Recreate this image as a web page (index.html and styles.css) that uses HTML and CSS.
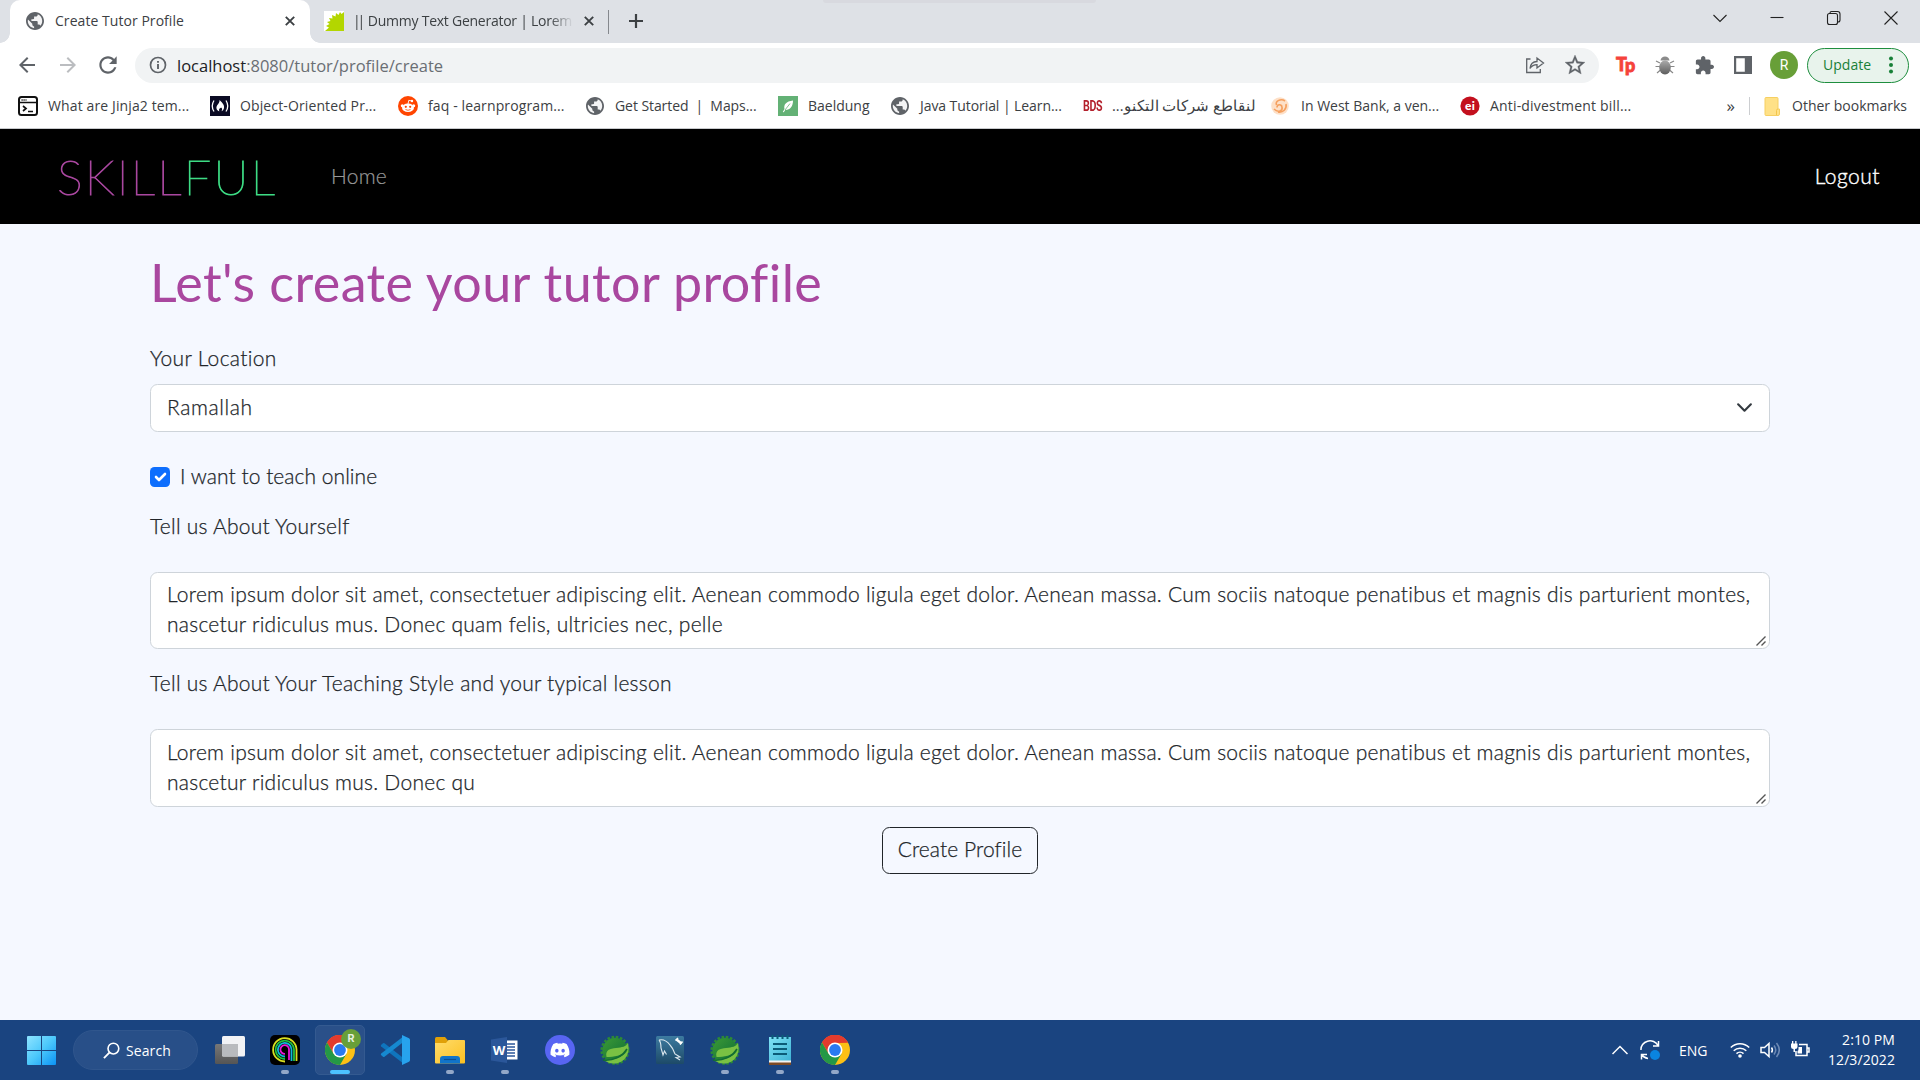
FILE: index.html
```html
<!DOCTYPE html>
<html lang="en">
<head>
<meta charset="utf-8">
<title>Create Tutor Profile</title>
<link rel="stylesheet" href="styles.css">
</head>
<body>
<svg class="defs" aria-hidden="true">
  <defs>
    <linearGradient id="win" x1="0" y1="0" x2="1" y2="1"><stop offset="0" stop-color="#8fe4ff"/><stop offset=".5" stop-color="#4cc8fb"/><stop offset="1" stop-color="#0b93f5"/></linearGradient>
    <linearGradient id="gray" x1="0" y1="0" x2="0" y2="1"><stop offset="0" stop-color="#777"/><stop offset="1" stop-color="#555"/></linearGradient>
    <linearGradient id="folder" x1="0" y1="0" x2="1" y2="1"><stop offset="0" stop-color="#ffdc6b"/><stop offset="1" stop-color="#fcc021"/></linearGradient>
    <linearGradient id="spring" x1="0" y1="0" x2="1" y2="1"><stop offset="0" stop-color="#3c9a36"/><stop offset="1" stop-color="#0b6b35"/></linearGradient>
    <linearGradient id="note" x1="0" y1="0" x2="1" y2="1"><stop offset="0" stop-color="#7fe3f5"/><stop offset="1" stop-color="#3fb4d6"/></linearGradient>
    <linearGradient id="sql" x1="0" y1="0" x2="0" y2="1"><stop offset="0" stop-color="#3d7ba0"/><stop offset="1" stop-color="#1d4a68"/></linearGradient>
    <linearGradient id="beetle" x1="0" y1="0" x2="0" y2="1"><stop offset="0" stop-color="#aaa"/><stop offset="1" stop-color="#5d5d5d"/></linearGradient>
  </defs>
  <symbol id="globe" viewBox="2 2 20 20"><circle cx="12" cy="12" r="9" fill="#f4f4f5"/><path fill="#5f6368" d="M12 2C6.48 2 2 6.48 2 12s4.48 10 10 10 10-4.48 10-10S17.52 2 12 2zm-1 17.93c-3.95-.49-7-3.85-7-7.93 0-.62.08-1.21.21-1.79L9 15v1c0 1.1.9 2 2 2v1.93zm6.9-2.54c-.26-.81-1-1.39-1.9-1.39h-1v-3c0-.55-.45-1-1-1H8v-2h2c.55 0 1-.45 1-1V7h2c1.1 0 2-.9 2-2v-.41c2.93 1.19 5 4.06 5 7.41 0 2.08-.8 3.97-2.1 5.39z"/></symbol>
  <symbol id="close" viewBox="0 0 10 10"><path d="M.8.8l8.4 8.4M9.2.8L.8 9.2" stroke="#3c4043" stroke-width="1.9"/></symbol>
  <symbol id="grip" viewBox="0 0 10 10"><path d="M.5 9.500l9-9M5.500 9.500l4-4" stroke="#555" stroke-width="1.400"/></symbol>
  <symbol id="arrow" viewBox="0 0 24 24"><path fill="currentColor" d="M20 11H7.83l5.59-5.59L12 4l-8 8 8 8 1.41-1.41L7.83 13H20v-2z"/></symbol>
  <symbol id="chrome" viewBox="0 0 30 30">
    <circle cx="15" cy="15" r="15" fill="#fcc015"/>
    <path fill="#e33b2e" d="M2 7.5A15 15 0 0 1 28 7.5L15 8.2z"/>
    <path fill="#e33b2e" d="M2 7.5L8.6 18.7 15 15V7.5h13A15 15 0 0 0 2 7.5z"/>
    <path fill="#249846" d="M2 7.5A15 15 0 0 0 15 30l6.5-11.2L15 15 8.6 18.7z"/>
    <circle cx="15" cy="15" r="7.5" fill="#fff"/><circle cx="15" cy="15" r="5.9" fill="#2a7af0"/>
  </symbol>
  <symbol id="leaf" viewBox="0 0 30 30">
    <circle cx="15" cy="15.3" r="12.6" fill="url(#spring)"/>
    <circle cx="15" cy="15.3" r="13.3" fill="none" stroke="#2c8a35" stroke-width="2.6" stroke-dasharray="2.6 1.6"/>
    <path d="M28 8c2 9-1 17-10 20-6 1.500-11-.5-14-3 9 .5 18-2 23.500-9.500C22 20.500 14 22 6.500 22 5 15 10 13.500 16 13 22 12.500 26 11.500 28 8z" fill="#7ac143"/>
    <path d="M3 25c10 1 19-3 24-11" fill="none" stroke="#126c33" stroke-width="1.600"/>
  </symbol>
</svg>

<header class="browser">
  <div class="tabs">
    <div class="tab tab-active">
      <svg class="fav18"><use href="#globe"/></svg>
      <span class="tab-title">Create Tutor Profile</span>
      <svg class="x"><use href="#close"/></svg>
    </div>
    <div class="tab tab-idle">
      <svg class="fav20" viewBox="0 0 20 20"><path fill="#fff" d="M0 0h20v20H0z"/><path fill="#b3d600" d="M20 1l-2.500 2L16 1l-1.500 3L12 2l-.5 3.500L8 4l.5 3.500L5 7l1.500 3L3 11l2.500 2L2 15l3 1.500L1 20h19z"/></svg>
      <span class="tab-title tab-fade"><span class="bars">||</span> Dummy Text Generator | Lorem</span>
      <svg class="x"><use href="#close"/></svg>
    </div>
    <svg class="plus" viewBox="0 0 16 16"><path d="M8 1v14M1 8h14" stroke="#3c4043" stroke-width="2.200"/></svg>
    <div class="window-buttons">
      <svg viewBox="0 0 16 16"><path d="M1.500 5L8 11.500 14.500 5"/></svg>
      <svg viewBox="0 0 16 16"><path d="M1.500 7.500h13"/></svg>
      <svg viewBox="0 0 16 16"><rect x="1.500" y="3.500" width="10" height="11" rx="2"/><path d="M4 3.500V3q0-1.500 1.500-1.500h6q2.500 0 2.500 2.500v6q0 2-2 2"/></svg>
      <svg viewBox="0 0 16 16"><path d="M1.500 1.500l13 13M14.500 1.500l-13 13"/></svg>
    </div>
    <div class="hint-bar"></div>
  </div>

  <div class="toolbar">
    <svg class="nav-icon"><use href="#arrow"/></svg>
    <svg class="nav-icon forward"><use href="#arrow"/></svg>
    <svg class="reload" viewBox="0 0 24 24"><path fill="#5f6368" d="M17.650 6.350C16.200 4.900 14.210 4 12 4c-4.420 0-7.990 3.580-7.990 8s3.570 8 7.990 8c3.730 0 6.840-2.550 7.730-6h-2.080c-.82 2.330-3.040 4-5.650 4-3.310 0-6-2.690-6-6s2.690-6 6-6c1.660 0 3.140.69 4.220 1.780L13 11h7V4l-2.350 2.350z"/></svg>
    <div class="omnibox">
      <svg class="info" viewBox="0 0 18 18"><circle cx="9" cy="9" r="7.500" fill="none" stroke="#5f6368" stroke-width="1.700"/><path d="M9 8v5M9 5v1.800" stroke="#5f6368" stroke-width="1.900"/></svg>
      <span class="url"><b>localhost</b>:8080/tutor/profile/create</span>
      <svg class="share" viewBox="0 0 20 20"><path d="M5.500 4H1.700v13.500h13.600V14" /><path d="M5 13.500c.5-4.500 3-7 7-7V3l6.500 5-6.500 5V9.700c-3 0-5.200 1-7 3.800z"/></svg>
      <svg class="star" viewBox="0 0 24 24"><path fill="#5f6368" stroke="#5f6368" stroke-width=".3" d="M22 9.240l-7.190-.62L12 2 9.190 8.630 2 9.240l5.460 4.730L5.820 21 12 17.270 18.180 21l-1.630-7.030L22 9.240zM12 15.400l-3.760 2.270 1-4.280-3.320-2.880 4.380-.38L12 6.100l1.710 4.040 4.380.38-3.320 2.880 1 4.280L12 15.400z"/></svg>
    </div>
    <div class="ext">
      <div class="tp"><span>T</span><span class="tp-p">p</span></div>
      <svg class="bug" viewBox="0 0 20 20"><g stroke="#888" stroke-width="1.200" fill="none"><path d="M5 8L1 6M5 11.500H.5M5.500 15L2 18M15 8l4-2M15 11.500h4.500M14.500 15l3.500 3"/></g><ellipse cx="10" cy="12.500" rx="5.800" ry="7" fill="url(#beetle)"/><path d="M5.500 5.500C6 0 14 0 14.500 5.500z" fill="#8b8b8b"/></svg>
      <svg class="puzzle" viewBox="1 1 22 22"><path fill="#5f6368" d="M20.500 11H19V7c0-1.100-.9-2-2-2h-4V3.500C13 2.120 11.880 1 10.500 1S8 2.120 8 3.500V5H4c-1.100 0-1.990.9-1.990 2v3.800H3.500c1.490 0 2.700 1.210 2.700 2.700s-1.210 2.700-2.700 2.700H2V20c0 1.100.9 2 2 2h3.800v-1.500c0-1.490 1.210-2.700 2.700-2.700 1.490 0 2.700 1.210 2.700 2.700V22H17c1.100 0 2-.9 2-2v-4h1.500c1.380 0 2.500-1.120 2.500-2.500S21.880 11 20.500 11z"/></svg>
      <svg class="panel" viewBox="0 0 18 18"><path fill="#5f6368" fill-rule="evenodd" d="M0 0h18v18H0zM2.200 2.200v13.600h8.600V2.200z"/></svg>
      <div class="avatar">R</div>
      <div class="update"><span>Update</span><i></i></div>
    </div>
  </div>

  <div class="bookmarks">
    <div class="bm wide1"><svg viewBox="0 0 20 20"><rect x="1" y="1" width="18" height="18" rx="2.500" fill="#fff" stroke="#111" stroke-width="2"/><path d="M1 6.500h18M5 10l3 2.500L5 15M10 15.500h5" fill="none" stroke="#111" stroke-width="1.700"/><path d="M3.500 4h5" stroke="#111" stroke-width="1.300" stroke-dasharray="1.200 .8"/></svg><span>What are Jinja2 tem...</span></div>
    <div class="bm wide1"><svg viewBox="0 0 20 20"><path fill="#0a0a23" d="M0 0h20v20H0z"/><path d="M4 4.500Q.5 10 4 15.500M16 4.500q3.500 5.500 0 11" fill="none" stroke="#fff" stroke-width="1.300"/><path d="M9.500 4c3.500 3 5 5.500 4.500 8-.2 1.600-1.200 2.600-2.500 3.200 1-1.700.7-2.700-.3-3.700-.4 1-.8 1-.8 0-1 1.200-2 2.500-1 3.700-3-.7-3.700-3.700-2.200-6 1.500-2 2.500-2.700 2.300-5.200z" fill="#fff"/></svg><span>Object-Oriented Pr...</span></div>
    <div class="bm wide1"><svg viewBox="0 0 20 20"><circle cx="10" cy="10" r="10" fill="#ff4500"/><ellipse cx="10" cy="11.700" rx="6" ry="4.300" fill="#fff"/><circle cx="4.300" cy="9.700" r="1.500" fill="#fff"/><circle cx="15.700" cy="9.700" r="1.500" fill="#fff"/><path d="M10 8l.8-3.700 3 .7" fill="none" stroke="#fff" stroke-width=".9"/><circle cx="14" cy="5" r="1.200" fill="#fff"/><circle cx="7.800" cy="10.800" r="1.100" fill="#ff4500"/><circle cx="12.200" cy="10.800" r="1.100" fill="#ff4500"/><path d="M7.500 13.500q2.500 1.600 5 0" fill="none" stroke="#ff4500" stroke-width=".8"/></svg><span>faq - learnprogram...</span></div>
    <div class="bm snug"><svg class="small"><use href="#globe"/></svg><span>Get Started&nbsp; |&nbsp; Maps...</span></div>
    <div class="bm"><svg viewBox="0 0 20 20"><path fill="#63b175" d="M0 0h20v20H0z"/><path d="M15 4.500c-7 1-9.500 4-8.500 8.500l-1.700 3 1 .3 1.400-2.300c5.300 0 7.800-4 7.800-9.500z" fill="#fff"/><path d="M7 14l5-6.500" stroke="#63b175" stroke-width=".8"/></svg><span>Baeldung</span></div>
    <div class="bm snug"><svg class="small"><use href="#globe"/></svg><span>Java Tutorial | Learn...</span></div>
    <div class="bm"><b class="bds">BDS</b><span class="arabic" dir="rtl">لنقاطع شركات التكنو...</span></div>
    <div class="bm"><svg viewBox="0 0 20 20"><circle cx="9" cy="10" r="8.800" fill="#fde0c8"/><path d="M3 13c4 4 9 2 8-2-.5-3-5-3-5 .5M14 5c-4-3-10 0-8.500 4M15 8c1 5-3 9-8 8" fill="none" stroke="#f5a05f" stroke-width="1.600"/></svg><span>In West Bank, a ven...</span></div>
    <div class="bm wide2"><svg viewBox="0 0 20 20"><circle cx="10" cy="10" r="9.600" fill="#c3101e"/><text x="10" y="14" text-anchor="middle" class="ei">ei</text></svg><span>Anti-divestment bill...</span></div>
    <div class="bm-end"><span class="more">»</span><svg class="bm-folder" viewBox="0 0 16 19"><path fill="#ffe187" stroke="#f6cf62" d="M1 1.500q0-1 1-1h11q1 0 1 1V12h1.500v5q0 1.500-1.500 1.500H2q-1 0-1-1z"/><path d="M12.500 18v-4.500q0-1.500 1.500-1.500" fill="none" stroke="#f3c54c"/></svg><span class="other">Other bookmarks</span></div>
  </div>
</header>

<nav class="navbar">
  <a class="brand"><span class="skill">SKILL</span><span class="ful">FUL</span></a>
  <a class="home">Home</a>
  <a class="logout">Logout</a>
</nav>

<main class="page">
  <h1>Let's create your tutor profile</h1>
  <form class="form">
    <label class="label location-label">Your Location</label>
    <div class="select"><span>Ramallah</span><svg viewBox="0 0 16 16"><path fill="none" stroke="#343a40" stroke-linecap="round" stroke-linejoin="round" stroke-width="2" d="m2 5 6 6 6-6"/></svg></div>
    <div class="check"><svg viewBox="0 0 20 20"><rect width="20" height="20" rx="4.500" fill="#0d6efd"/><path fill="none" stroke="#fff" stroke-linecap="round" stroke-linejoin="round" stroke-width="2.600" d="m6 10 3 3 6-6"/></svg><label>I want to teach online</label></div>
    <label class="label about-label">Tell us About Yourself</label>
    <div class="area"><textarea class="about">Lorem ipsum dolor sit amet, consectetuer adipiscing elit. Aenean commodo ligula eget dolor. Aenean massa. Cum sociis natoque penatibus et magnis dis parturient montes, nascetur ridiculus mus. Donec quam felis, ultricies nec, pelle</textarea><svg class="grip"><use href="#grip"/></svg></div>
    <label class="label style-label">Tell us About Your Teaching Style and your typical lesson</label>
    <div class="area"><textarea class="style">Lorem ipsum dolor sit amet, consectetuer adipiscing elit. Aenean commodo ligula eget dolor. Aenean massa. Cum sociis natoque penatibus et magnis dis parturient montes, nascetur ridiculus mus. Donec qu</textarea><svg class="grip"><use href="#grip"/></svg></div>
    <button type="button" class="submit">Create Profile</button>
  </form>
</main>

<footer class="taskbar">
  <svg class="start" viewBox="0 0 29 29"><path fill="url(#win)" d="M1 0h13v14H0V1q0-1 1-1zM15 0h13q1 0 1 1v13H15zM0 15h14v14H1q-1 0-1-1zM15 15h14v13q0 1-1 1H15z"/></svg>
  <div class="search"><svg viewBox="0 0 18 18"><circle cx="11" cy="7" r="5.700" fill="none" stroke="#fff" stroke-width="1.700"/><path d="M7 11l-6 6" stroke="#fff" stroke-width="2"/></svg>Search</div>
  <div class="apps">
    <div class="app"><svg viewBox="0 0 30 30"><rect x="0" y="9" width="23" height="20" rx="1.500" fill="url(#gray)"/><rect x="7" y="1" width="23" height="20.500" rx="1.500" fill="#f2f3f5"/><path d="M7 9h16v12.500H8.500Q7 21.500 7 20z" fill="#b9bbbe"/></svg></div>
    <div class="app running"><svg viewBox="0 0 30 30"><rect width="30" height="30" rx="5" fill="#000"/><g fill="none" stroke-width="1.800"><path d="M26.500 26V14.500A11.700 11.700 0 1 0 15 26.500" stroke="#d8e020"/><path d="M24 26V14.500A9.200 9.200 0 1 0 15 24" stroke="#20c040"/><path d="M21.500 26V14.500A6.800 6.800 0 1 0 15 21.500" stroke="#10b8d8"/><path d="M19 25V14.500a4.300 4.300 0 1 0-4 4.300" stroke="#e818d8"/></g></svg></div>
    <div class="app running current"><svg><use href="#chrome"/></svg><span class="badge">R</span></div>
    <div class="app"><svg viewBox="0 0 30 30"><path fill="#0f75bd" d="M1 10l2-1.700q.8-.5 1.500 0L24 23.500V29L1.200 11.500Q.5 10.700 1 10z"/><path fill="#1689d0" d="M1 20l2 1.700q.8.500 1.500 0L24 6.500V1L1.200 18.500q-.7.800-.2 1.500z"/><path fill="#27a3ee" d="M22 0l7 3.300q1 .5 1 1.700v20q0 1.200-1 1.700L22 30V0z"/></svg></div>
    <div class="app running"><svg viewBox="0 0 30 30"><path fill="#e0a008" d="M0 3.500Q0 2 1.500 2H10l3 3.500V9H0z"/><path fill="url(#folder)" d="M0 8h11l2.500-3H29q1 0 1 1v21.500q0 1-1 1H1q-1 0-1-1z"/><path fill="#1174c9" d="M5 28.500V24q0-3 3-3h14q3 0 3 3v4.500z"/><path d="M9 24.500h12" stroke="#0b4f94" stroke-width="1.200"/></svg></div>
    <div class="app running"><svg viewBox="0 0 30 30"><path fill="#fff" d="M15 5.500h12.500v19H15z"/><path d="M17 9h8M17 12h8M17 15h8M17 18h8M17 21h8" stroke="#2b579a" stroke-width="1.300"/><path fill="#2b579a" d="M1 4.500L17 2v26L1 25.500z"/><text x="9" y="19.500" text-anchor="middle" class="word">W</text></svg></div>
    <div class="app"><svg viewBox="0 0 30 30"><circle cx="15" cy="15" r="15" fill="#5865f2"/><path fill="#fff" transform="translate(5.500 5.500) scale(.79)" d="M20.317 4.370a19.791 19.791 0 0 0-4.885-1.515.074.074 0 0 0-.079.037c-.211.375-.445.865-.608 1.250-1.845-.276-3.680-.276-5.487 0-.164-.393-.406-.874-.618-1.250a.077.077 0 0 0-.079-.037 19.736 19.736 0 0 0-4.885 1.515.070.070 0 0 0-.032.028C.533 9.046-.319 13.580.099 18.058a.082.082 0 0 0 .031.056c2.053 1.508 4.041 2.423 5.993 3.029a.078.078 0 0 0 .084-.028c.462-.630.873-1.295 1.226-1.994a.076.076 0 0 0-.042-.106c-.653-.248-1.274-.550-1.872-.892a.077.077 0 0 1-.008-.128c.126-.094.252-.192.372-.291a.074.074 0 0 1 .078-.011c3.928 1.793 8.180 1.793 12.061 0a.074.074 0 0 1 .079.010c.120.099.246.198.373.292a.077.077 0 0 1-.007.128 12.299 12.299 0 0 1-1.873.891.077.077 0 0 0-.041.107c.360.698.772 1.363 1.225 1.993a.076.076 0 0 0 .084.029c1.961-.607 3.950-1.522 6.002-3.029a.077.077 0 0 0 .031-.055c.500-5.177-.838-9.674-3.549-13.660a.061.061 0 0 0-.031-.029zM8.020 15.331c-1.183 0-2.157-1.086-2.157-2.419 0-1.333.956-2.419 2.157-2.419 1.211 0 2.176 1.095 2.157 2.419 0 1.333-.956 2.419-2.157 2.419zm7.975 0c-1.183 0-2.157-1.086-2.157-2.419 0-1.333.955-2.419 2.157-2.419 1.211 0 2.176 1.095 2.157 2.419 0 1.333-.946 2.419-2.157 2.419z"/></svg></div>
    <div class="app"><svg><use href="#leaf"/></svg></div>
    <div class="app"><svg viewBox="0 0 30 30"><rect x="1" y="1" width="28" height="28" rx="1.500" fill="url(#sql)"/><path d="M4 5c4-1 8 1 11 5 3 3 4 6 5 9l5 3-4 .5 4 2.500M4 5c2 2 2 5 2 8l2 7 1.500-4 2 3.500" fill="none" stroke="#dce8ef" stroke-width="1.100"/><path d="M21.500 4.500l5 4" stroke="#fff" stroke-width="2.500"/><path d="M20.500 5.500l2.500-2.500M25 9.500l2.500-3" stroke="#fff" stroke-width="1.600"/></svg></div>
    <div class="app running"><svg><use href="#leaf"/></svg></div>
    <div class="app running"><svg viewBox="0 0 30 30"><path fill="#7c4a25" d="M4 25h22v5H4z"/><path fill="#f2f2f2" d="M4 24h22v3.500H4z"/><path fill="url(#note)" d="M4 2h22v23.500H4z"/><path d="M7.500 0v4M12.500 0v4M17.500 0v4M22.500 0v4" stroke="#0b5c78" stroke-width="2"/><path d="M8 9h14M8 14h14M8 19h14" stroke="#0b5c78" stroke-width="2"/></svg></div>
    <div class="app running"><svg><use href="#chrome"/></svg></div>
  </div>
  <div class="tray">
    <svg class="up" viewBox="0 0 16 16"><path d="M.5 12L8 4.500 15.500 12"/></svg>
    <svg class="sync" viewBox="0 0 20 20"><path d="M1 10A9 8.500 0 0 1 18 5.500M18.500 1v5h-5.500M8 18.500C5 18 3 17 1.500 14.500M1.500 19.500v-5H7"/><circle cx="15" cy="15" r="5" class="dot"/></svg>
    <span class="lang">ENG</span>
    <svg class="wifi" viewBox="0 0 20 20"><path d="M.8 7.500a13 13 0 0 1 18.400 0M3.700 10.700a9 9 0 0 1 12.600 0M6.500 13.600a5 5 0 0 1 7 0"/><circle cx="10" cy="16" r="1.800" class="fill"/></svg>
    <svg class="sound" viewBox="0 0 20 20"><path d="M1 7.500h3.500L9 3.500v13l-4.500-4H1z"/><path d="M11.500 7.500q1.800 2.500 0 5"/><path class="dim" d="M14 5.500q3.500 4.500 0 9M16.500 3q5.500 7 0 14"/></svg>
    <svg class="battery" viewBox="0 0 20 20"><path d="M9 4.500h8V15.500H6V11M17.500 8H19v4h-1.500" /><path class="fill" d="M1 3.500h6.500V7Q7.500 9 5 9v3H3.500V9Q1 9 1 7zM2 1h1.300v3H2zM5.200 1h1.300v3H5.200zM8.500 7h3.500v6.500H7.500V11q1 0 1-2z"/></svg>
    <div class="clock"><span>2:10 PM</span><span>12/3/2022</span></div>
  </div>
</footer>
</body>
</html>
```
FILE: styles.css
```css
* { box-sizing: border-box; }
body {
  margin: 0;
  width: 1920px;
  height: 1080px;
  overflow: hidden;
  display: flex;
  flex-direction: column;
  background: #f5f8ff;
  font-family: "Open Sans", "Noto Sans", sans-serif;
  font-size: 14px;
  color: #3c4043;
}
svg { display: block; flex: none; }
.defs { position: absolute; width: 0; height: 0; }

/* Browser chrome */
.browser { flex: none; height: 129px; background: #fff; border-bottom: 1px solid #c8cacd; }
.tabs { position: relative; height: 43px; padding-left: 10px; display: flex; background: #dee1e6; }
.tab { display: flex; align-items: center; height: 42px; white-space: nowrap; }
.tab-active { position: relative; width: 300px; height: 43px; padding: 0 15px 1px 16px; background: #fff; border-radius: 10px 10px 0 0; }
.tab-active::before, .tab-active::after { content: ""; position: absolute; bottom: 0; width: 10px; height: 10px; }
.tab-active::before { left: -10px; background: radial-gradient(circle at 0 0, transparent 9.5px, #fff 10px); }
.tab-active::after { right: -10px; background: radial-gradient(circle at 100% 0, transparent 9.5px, #fff 10px); }
.tab-idle { position: relative; width: 299px; padding: 0 14px 0 14px; }
.tab-idle::after { content: ""; position: absolute; right: 0; top: 10px; width: 1px; height: 24px; background: #85888d; }
.tab-title { flex: 1; padding: 0 0 2px 11px; overflow: hidden; letter-spacing: .05px; }
.tab-fade { flex: none; width: 234px; padding-left: 10px; margin-right: 6px; letter-spacing: -.25px; mask-image: linear-gradient(to right, #000 88%, transparent 98%); }
.bars { letter-spacing: -3.2px; margin-right: 2.5px; margin-left: -1px; }
.fav18 { width: 18px; height: 18px; }
.fav20 { width: 20px; height: 20px; }
.x { width: 10px; height: 10px; }
.plus { width: 16px; height: 16px; margin: 13px 0 0 19px; }
.window-buttons { margin-left: auto; padding: 10px 21px 0 0; display: flex; gap: 41px; }
.window-buttons svg { width: 16px; height: 16px; fill: none; stroke: #222; stroke-width: 1.1; }
.hint-bar { position: absolute; left: 823px; top: 0; width: 273px; height: 3px; background: #d8d9df; border-radius: 0 0 4px 4px; }

.toolbar { height: 44px; padding: 0 9px 0 15px; display: flex; align-items: center; }
.nav-icon { width: 24px; height: 24px; color: #5f6368; }
.forward { margin-left: 17px; color: #bbbdc0; transform: scaleX(-1); }
.reload { width: 26px; height: 26px; margin: 0 14px 0 15px; }
.omnibox { width: 1464px; height: 35px; padding: 0 12px 0 14px; display: flex; align-items: center; border-radius: 18px; background: #f1f3f4; }
.info { width: 18px; height: 18px; margin-right: 10px; }
.url { flex: 1; font-size: 16.5px; color: #6a6e73; }
.url b { font-weight: 400; color: #202124; }
.share { width: 20px; height: 20px; margin-right: 18px; fill: none; stroke: #5f6368; stroke-width: 1.3; }
.star { width: 24px; height: 24px; }
.ext { flex: 1; display: flex; align-items: center; margin-left: 17px; }
.tp { width: 20px; height: 22px; margin-right: 19px; display: flex; font: 900 18px/20px Lato, sans-serif; color: #f5423c; letter-spacing: -1px; -webkit-text-stroke: .8px #f5423c; }
.tp-p { padding-top: 1px; margin-left: -1px; }
.bug { width: 20px; height: 20px; margin-right: 20px; }
.puzzle { width: 19px; height: 19px; margin-right: 20px; }
.panel { width: 18px; height: 18px; margin-right: 18px; }
.avatar { width: 28px; height: 28px; margin-right: 9px; border-radius: 50%; background: #689f38; color: #fff; font: 14px/28px Roboto, sans-serif; text-align: center; }
.update { width: 102px; height: 35px; padding-left: 15px; display: flex; align-items: center; border: 1.5px solid #1e8e3e; border-radius: 18px; background: #e8f3ec; color: #188038; letter-spacing: .05px; }
.update span { padding-bottom: 2px; }
.update i { width: 4px; height: 4px; margin: 0 15px 0 auto; border-radius: 50%; background: #188038; box-shadow: 0 -6.5px #188038, 0 6.5px #188038; }

.bookmarks { height: 38px; padding-left: 18px; display: grid; grid-template-columns: 192px 188px 188px 192px 113px 192px 188px 189px 200px 1fr; align-items: center; }
.bm { display: flex; align-items: center; gap: 10px; white-space: nowrap; }
.bm span { padding-bottom: 2px; }
.bm svg { width: 20px; height: 20px; }
.bm svg.small { width: 18px; height: 18px; margin-right: 1px; }
.snug { letter-spacing: -.07px; }
.wide1 { letter-spacing: .12px; }
.wide2 { letter-spacing: .18px; }
.bm .arabic { font-size: 14.6px; }
.bds { width: 19px; font: 700 15px/20px Roboto, sans-serif; color: #b3202c; letter-spacing: -.5px; transform: scaleX(.71); transform-origin: left; }
.ei { font: 900 12px Lato, sans-serif; fill: #fff; }
.bm-end { display: flex; align-items: center; justify-content: flex-end; padding-right: 13px; white-space: nowrap; }
.more { padding-right: 14px; margin-right: 14px; border-right: 1px solid #ccced1; font-size: 17px; line-height: 18px; }
.bm-folder { width: 16px; height: 19px; margin-right: 12px; }
.other { padding-bottom: 2px; }

/* Site */
.navbar { flex: none; height: 95px; padding: 0 40px 2px 57px; display: flex; align-items: center; background: #000; font: 300 21px/30px Lato, sans-serif; }
.brand { width: 274px; font-size: 48.5px; font-weight: 100; line-height: 58px; white-space: nowrap; }
.skill { color: #a9479f; letter-spacing: 2.2px; -webkit-text-stroke: 1px #a9479f; }
.ful { color: #3ddc84; letter-spacing: 2.4px; -webkit-text-stroke: 1px #3ddc84; }
.home { color: #989898; letter-spacing: .2px; -webkit-text-stroke: .2px #989898; }
.logout { margin-left: auto; color: #fff; letter-spacing: .5px; -webkit-text-stroke: .4px #fff; }

.page { flex: 1; padding: 28px 150px 0; font: 300 21px/30px Lato, sans-serif; color: #212529; letter-spacing: .25px; -webkit-text-stroke: .25px #212529; }
h1 { margin: 0; font-size: 52px; font-weight: 400; line-height: 60px; letter-spacing: .42px; color: #a9479f; -webkit-text-stroke: 0; }
.form { display: flex; flex-direction: column; }
.location-label { margin: 31px 0 11px; letter-spacing: .3px; }
.select { height: 48px; padding: 0 16px 2px 16px; display: flex; align-items: center; justify-content: space-between; background: #fff; border: 1px solid #ced4da; border-radius: 7.5px; letter-spacing: .6px; }
.select svg { width: 17px; height: 17px; margin-top: 1px; }
.check { margin-top: 29px; display: flex; align-items: center; gap: 10px; letter-spacing: .04px; }
.check svg { width: 20px; height: 20px; margin-top: 1px; }
.about-label { margin: 20px 0 31px; }
.style-label { margin: 19px 0 31px; }
.area { position: relative; }
.grip { position: absolute; right: 4px; bottom: 3px; width: 10px; height: 10px; }
textarea { display: block; width: 100%; height: 77px; margin: 0; padding: 6px 16px; overflow: hidden; resize: none; background: #fff; border: 1px solid #ced4da; border-radius: 7.5px; font: inherit; letter-spacing: .255px; color: inherit; }
textarea.style { height: 78px; padding-top: 7px; }
.submit { align-self: center; width: 156px; height: 47px; margin-top: 20px; padding: 0 0 3px; border: 1px solid #212529; border-radius: 7.5px; background: transparent; font: inherit; letter-spacing: .08px; color: #212529; -webkit-text-stroke: inherit; }

/* Taskbar */
.taskbar { flex: none; height: 60px; padding: 0 25px 0 27px; display: flex; align-items: center; background: #1a4480; color: #fff; }
.start { width: 29px; height: 29px; }
.search { width: 125px; height: 40px; margin-left: 17px; padding-left: 29px; display: flex; align-items: center; gap: 6px; border: 1px solid #30568d; border-radius: 20px; background: #284f88; letter-spacing: .1px; }
.search svg { width: 17px; height: 17px; }
.apps { display: flex; margin-left: 4.5px; }
.app { position: relative; width: 55px; height: 50px; display: flex; align-items: center; justify-content: center; }
.app svg { width: 30px; height: 30px; }
.running::after { content: ""; position: absolute; left: 23.5px; bottom: 1px; width: 8px; height: 4px; border-radius: 2px; background: #93a8c8; }
.current { width: 50px; margin: 0 2.5px; border: 1px solid #345a90; border-radius: 5px; background: #2a5089; }
.current::after { left: 14px; bottom: 0; width: 20px; background: #4cc2ff; }
.badge { position: absolute; left: 25px; top: 3px; width: 20px; height: 20px; border-radius: 50%; background: #689f38; color: #e8f0e0; font: 700 11px/20px Roboto, sans-serif; text-align: center; }
.tray { margin-left: auto; display: flex; align-items: center; }
.tray svg { width: 20px; height: 20px; fill: none; stroke: #fff; stroke-width: 1.5; }
.tray svg.up { width: 16px; height: 16px; margin-right: 12px; }
.tray .dot { fill: #0a84e0; stroke: none; }
.tray .fill { fill: #fff; stroke: none; }
.tray .dim { stroke: #6d8ab5; }
.lang { margin: 0 23px 0 19px; width: 28px; }
.wifi { margin-right: 10px; }
.sound { margin-right: 10px; }
.clock { width: 85px; display: flex; flex-direction: column; align-items: flex-end; line-height: 20px; letter-spacing: .08px; }
.word { font: 700 13px "Open Sans", sans-serif; fill: #fff; }
```
